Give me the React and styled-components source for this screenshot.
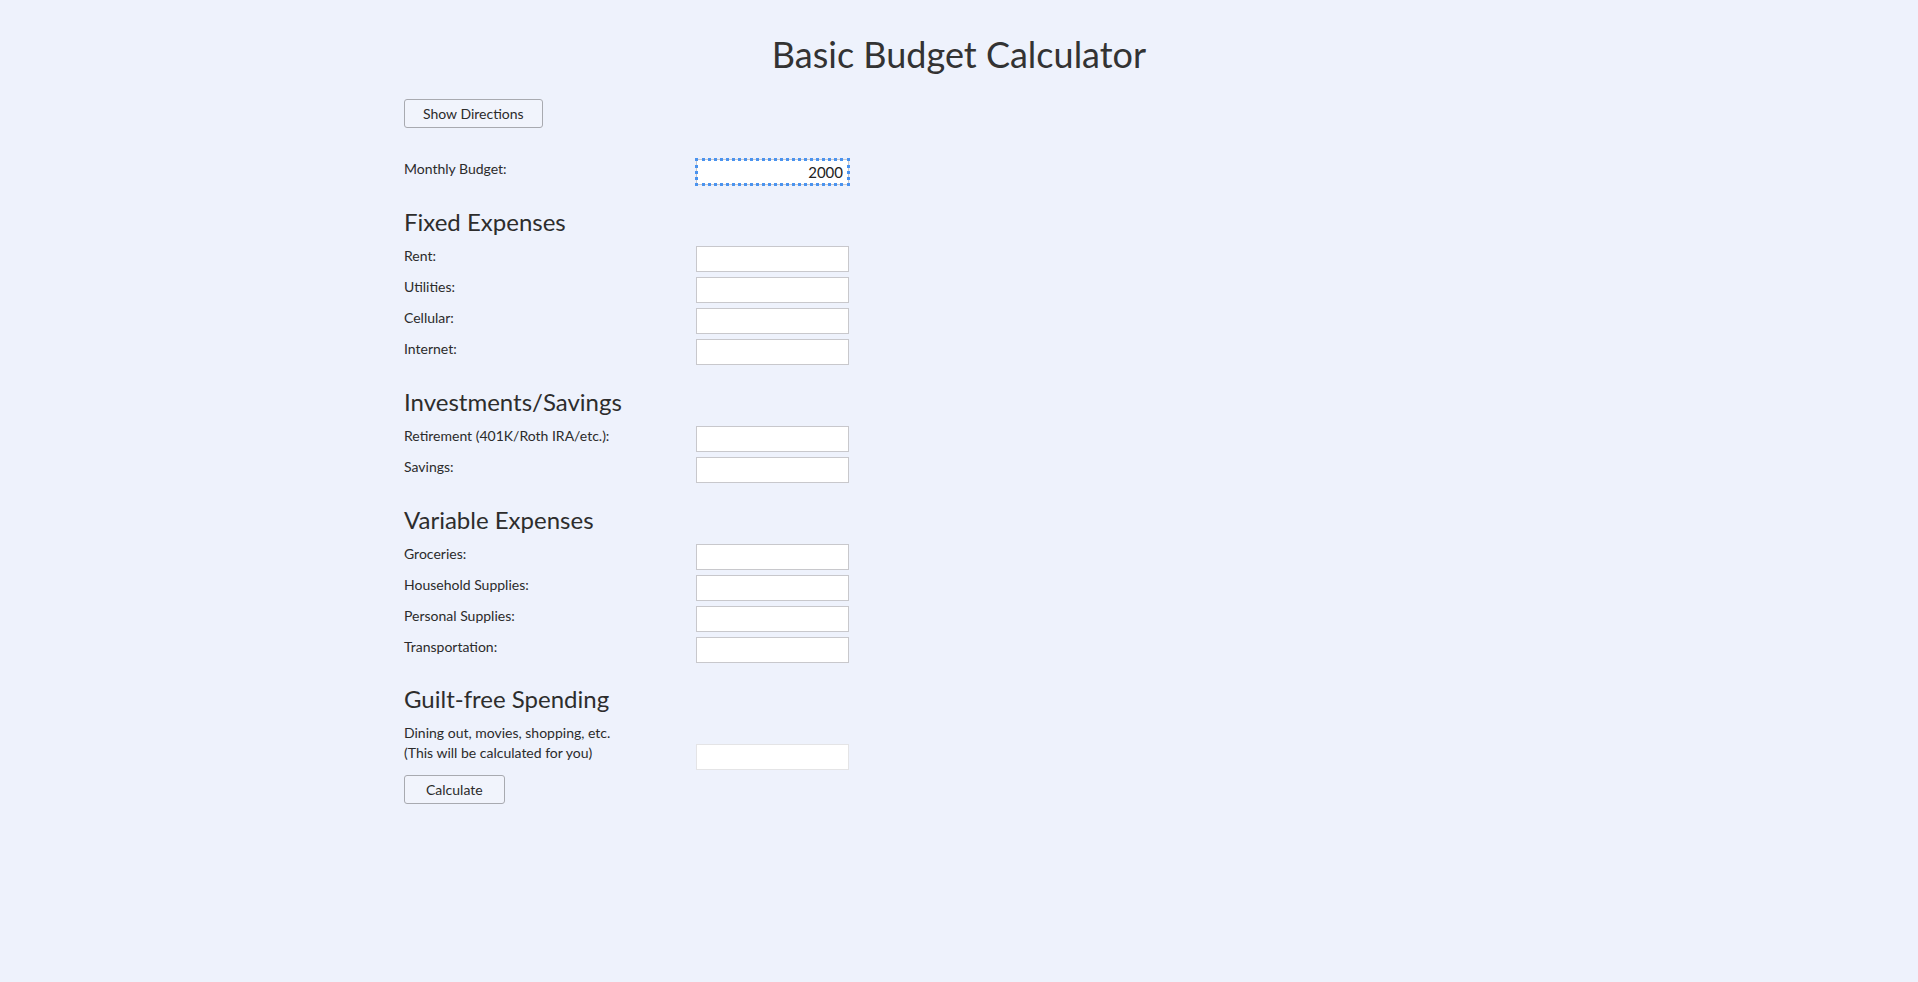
import styled, { createGlobalStyle } from 'styled-components'

const GlobalStyle = createGlobalStyle`
  html, body {
    margin: 0;
    padding: 0;
    background: #eef2fc;
  }
  body {
    font-family: Lato, "Open Sans", sans-serif;
    color: #333;
  }
`

const Page = styled.div`
  min-height: 982px;
  padding-top: 33px;
  box-sizing: border-box;
`

const Title = styled.h1`
  margin: 0;
  text-align: center;
  font-size: 36px;
  line-height: 42px;
  font-weight: 400;
  color: #333;
`

const Container = styled.div`
  width: 1110px;
  margin: 0 auto;
  display: flex;
  flex-direction: column;
  align-items: flex-start;
`

const Button = styled.button`
  align-self: flex-start;
  margin-top: ${p => p.$top || 0}px;
  height: 29px;
  padding: 0 ${p => p.$pad || 19}px;
  font-family: Lato, sans-serif;
  font-size: 14px;
  color: #2b2b2b;
  background: #f1f4fc;
  border: 1px solid #a8aab0;
  border-radius: 3px;
  cursor: pointer;
`

const Section = styled.section`
  margin-top: ${p => p.$top || 22}px;
  display: flex;
  flex-direction: column;
  gap: 5px;
`

const Heading = styled.h2`
  margin: 0 0 4px;
  font-size: 24px;
  line-height: 30px;
  font-weight: 400;
  color: #2d2d2d;
`

const Row = styled.div`
  display: flex;
  align-items: flex-start;
`

const Label = styled.label`
  width: 292px;
  font-size: 14px;
  line-height: 20px;
  color: #2b2b2b;
`

const Input = styled.input`
  box-sizing: border-box;
  width: 153px;
  height: 26px;
  margin: 0;
  margin-top: ${p => p.$offset || 0}px;
  padding: 0 5px;
  font-family: Lato, sans-serif;
  font-size: 15px;
  color: #222;
  text-align: right;
  background: #fff;
  border: 1px solid ${p => (p.$muted ? '#e4e4e6' : '#c8c8cc')};
  border-radius: 0;
  outline: ${p => (p.$focused ? '3px dotted #4a93ef' : 'none')};
  outline-offset: -2px;
`

const Field = ({ label, value, ...rest }) => (
  <Row>
    <Label>{label}</Label>
    <Input type="text" defaultValue={value} {...rest} />
  </Row>
)

const sections = [
  { title: 'Fixed Expenses', items: ['Rent:', 'Utilities:', 'Cellular:', 'Internet:'] },
  { title: 'Investments/Savings', items: ['Retirement (401K/Roth IRA/etc.):', 'Savings:'] },
  {
    title: 'Variable Expenses',
    items: ['Groceries:', 'Household Supplies:', 'Personal Supplies:', 'Transportation:'],
  },
]

export default function App() {
  return (
    <Page>
      <GlobalStyle />
      <Title>Basic Budget Calculator</Title>
      <Container>
        <Button $top={24} $pad={18}>Show Directions</Button>
        <Section $top={31}>
          <Field label="Monthly Budget:" value="2000" $focused />
        </Section>
        {sections.map(s => (
          <Section key={s.title}>
            <Heading>{s.title}</Heading>
            {s.items.map(item => (
              <Field key={item} label={item} />
            ))}
          </Section>
        ))}
        <Section $top={21}>
          <Heading>Guilt-free Spending</Heading>
          <Row>
            <Label>
              Dining out, movies, shopping, etc.
              <br />
              (This will be calculated for you)
            </Label>
            <Input type="text" readOnly $muted $offset={21} />
          </Row>
          <Button $pad={21}>Calculate</Button>
        </Section>
      </Container>
    </Page>
  )
}
